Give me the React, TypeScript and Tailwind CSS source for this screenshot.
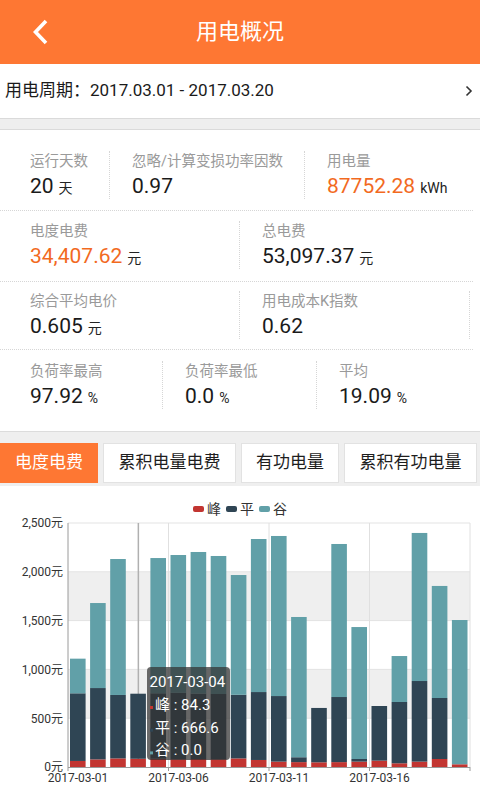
import clsx from "clsx";

// [峰, 平, 谷] per day, 2017-03-01 .. 2017-03-20
const bars: [number, number, number][] = [
  [62, 693, 355],
  [78, 731, 871],
  [88, 650, 1393],
  [84.3, 666.6, 0],
  [85, 670, 1386],
  [80, 680, 1412],
  [82, 670, 1451],
  [80, 668, 1414],
  [88, 652, 1227],
  [72, 696, 1568],
  [55, 672, 1640],
  [50, 50, 1437],
  [48, 557, 0],
  [50, 667, 1568],
  [55, 27, 1352],
  [65, 560, 0],
  [38, 628, 471],
  [55, 826, 1517],
  [82, 625, 1148],
  [28, 0, 1478],
];

const PEAK = "#c23531";
const FLAT = "#2f4554";
const VALLEY = "#61a0a8";

function Stat({
  label,
  value,
  unit,
  orange,
  border,
  className,
}: {
  label: string;
  value: string;
  unit?: string;
  orange?: boolean;
  border?: boolean;
  className?: string;
}) {
  return (
    <div
      className={clsx(
        "pl-[22px] h-[48px]",
        border && "border-l border-dotted border-[#d6d6d6]",
        className
      )}
    >
      <div className="h-[22px] leading-[22px] text-[14.5px] text-[#9a9a9a] whitespace-nowrap">
        {label}
      </div>
      <div className="h-[26px] leading-[26px] flex items-baseline gap-[5px] whitespace-nowrap">
        <span className={clsx("text-[21px]", orange ? "text-[#f26a1f]" : "text-[#1a1a1a]")}>
          {value}
        </span>
        {unit && <span className="text-[14px] text-[#222]">{unit}</span>}
      </div>
    </div>
  );
}

function Chart() {
  const left = 68;
  const right = 470;
  const step = 20.1;
  const bw = 15.6;
  const top = 6;
  const base = 250;
  const k = (base - top) / 2500;
  const yv = (v: number) => base - v * k;
  const ticks = [0, 500, 1000, 1500, 2000, 2500];

  return (
    <svg width="480" height="283" className="block" fontFamily="Roboto, 'Noto Sans CJK SC', sans-serif">
      {/* split areas */}
      <rect x={left} y={yv(2000)} width={right - left} height={500 * k} fill="#efefef" />
      <rect x={left} y={yv(1000)} width={right - left} height={500 * k} fill="#efefef" />
      {ticks.slice(1).map((v) => (
        <line key={v} x1={left} x2={right} y1={yv(v)} y2={yv(v)} stroke="#e3e3e3" />
      ))}
      {[5, 10, 15, 20].map((i) => (
        <line key={i} x1={left + i * step} x2={left + i * step} y1={top} y2={base} stroke="#e0e0e0" />
      ))}
      {/* axis pointer */}
      <line x1={left + 3.5 * step} x2={left + 3.5 * step} y1={top} y2={base} stroke="#b0b0b0" strokeWidth="1.5" />

      {bars.map(([p, f, v], i) => {
        const x = left + 2 + i * step;
        return (
          <g key={i}>
            <rect x={x} y={yv(p)} width={bw} height={p * k} fill={PEAK} />
            {f > 0 && <rect x={x} y={yv(p + f)} width={bw} height={f * k} fill={FLAT} />}
            {v > 0 && <rect x={x} y={yv(p + f + v)} width={bw} height={v * k} fill={VALLEY} />}
          </g>
        );
      })}

      {/* axes */}
      <line x1={left} x2={left} y1={top} y2={base} stroke="#9a9a9a" />
      <line x1={left} x2={right} y1={base + 0.5} y2={base + 0.5} stroke="#9a9a9a" />
      {[0, 5, 10, 15, 20].map((i) => (
        <line key={i} x1={left + i * step} x2={left + i * step} y1={base} y2={base + 4} stroke="#9a9a9a" />
      ))}
      {ticks.map((v) => (
        <text key={v} x={63} y={yv(v)} dy="0.36em" textAnchor="end" fontSize="12" fill="#333">
          {v.toLocaleString("en-US")}元
        </text>
      ))}
      {["2017-03-01", "2017-03-06", "2017-03-11", "2017-03-16"].map((d, j) => (
        <text key={d} x={left + (5 * j + 0.5) * step} y={264.5} textAnchor="middle" fontSize="12" fill="#333">
          {d}
        </text>
      ))}

      {/* tooltip */}
      <rect x={147} y={150} width={83} height={93} rx={4} fill="rgba(50,50,50,0.72)" />
      <text x={149.5} y={165} dominantBaseline="central" fontSize="15" fill="#fff">
        2017-03-04
      </text>
      {[
        ["峰 : 84.3", PEAK],
        ["平 : 666.6", FLAT],
        ["谷 : 0.0", VALLEY],
      ].map(([t, c], i) => (
        <g key={t}>
          <rect x={150} y={189 + i * 22.7} width={3} height={3} fill={c} />
          <text x={155} y={188 + i * 22.7} dominantBaseline="central" fontSize="15" fill="#fff">
            {t}
          </text>
        </g>
      ))}
    </svg>
  );
}

export default function App() {
  const tabs = [
    { label: "电度电费", w: "w-[98px]", active: true },
    { label: "累积电量电费", w: "w-[133px]" },
    { label: "有功电量", w: "w-[98px]" },
    { label: "累积有功电量", w: "w-[133px]" },
  ];

  return (
    <div className="w-[480px] h-[800px] overflow-hidden bg-white font-[Roboto,'Noto_Sans_CJK_SC',sans-serif]">
      {/* header */}
      <div className="h-16 bg-[#fe7733] grid grid-cols-[80px_1fr_80px] items-center">
        <div className="pl-[32px] flex items-center">
          <svg width="18" height="26" viewBox="0 0 18 26">
            <polyline points="14,2 3.5,13 14,24" fill="none" stroke="#fff" strokeWidth="3.6" strokeLinejoin="miter" />
          </svg>
        </div>
        <div className="text-center text-white text-[22px] leading-none">用电概况</div>
        <div />
      </div>

      {/* period */}
      <div className="h-[54px] flex items-center justify-between pl-[5px] pr-[7px] text-[17px] text-[#1a1a1a]">
        <span>用电周期：2017.03.01 - 2017.03.20</span>
        <svg width="8" height="12" viewBox="0 0 8 12">
          <polyline points="1.5,1.5 6,6 1.5,10.5" fill="none" stroke="#333" strokeWidth="1.6" />
        </svg>
      </div>
      <div className="h-[12px] bg-[#eeeeee] border-t border-b border-[#dadada]" />

      {/* stats */}
      <div className="bg-white">
        <div className="pt-[21px] pb-[11px] border-b border-dotted border-[#d6d6d6] mr-[7px]">
          <div className="flex pl-[8px]">
            <Stat className="w-[101px]" label="运行天数" value="20" unit="天" />
            <Stat className="w-[195px]" border label="忽略/计算变损功率因数" value="0.97" />
            <Stat className="flex-1" border label="用电量" value="87752.28" unit="kWh" orange />
          </div>
        </div>
        <div className="pt-[10px] pb-[12px] border-b border-dotted border-[#d6d6d6] mr-[7px]">
          <div className="grid grid-cols-2 pl-[8px] pr-[3px]">
            <Stat label="电度电费" value="34,407.62" unit="元" orange />
            <Stat border label="总电费" value="53,097.37" unit="元" />
          </div>
        </div>
        <div className="pt-[9px] pb-[10px] border-b border-dotted border-[#d6d6d6] mr-[7px]">
          <div className="grid grid-cols-2 pl-[8px] pr-[3px]">
            <Stat label="综合平均电价" value="0.605" unit="元" />
            <Stat border className="border-r border-dotted" label="用电成本K指数" value="0.62" />
          </div>
        </div>
        <div className="pt-[11px] pb-[22px] mr-[7px]">
          <div className="grid grid-cols-3 pl-[8px] pr-[3px]">
            <Stat label="负荷率最高" value="97.92" unit="%" />
            <Stat border label="负荷率最低" value="0.0" unit="%" />
            <Stat border label="平均" value="19.09" unit="%" />
          </div>
        </div>
      </div>

      {/* tabs */}
      <div className="bg-[#efefef] border-t border-[#dcdcdc] pt-[11px] pb-[3px] flex gap-[5px]">
        {tabs.map((t) => (
          <div
            key={t.label}
            className={clsx(
              "h-[40px] flex items-center justify-center text-[17px]",
              t.w,
              t.active ? "bg-[#fe7733] text-white" : "bg-white text-[#1e1e1e] border border-[#e2e2e2]"
            )}
          >
            {t.label}
          </div>
        ))}
      </div>

      {/* chart */}
      <div className="bg-white">
        <div className="pt-[15px] h-[31px] flex justify-center items-center gap-[5px] text-[14px] leading-[16px] text-[#333]">
          {[
            ["峰", "bg-[#c23531]"],
            ["平", "bg-[#2f4554]"],
            ["谷", "bg-[#61a0a8]"],
          ].map(([l, c]) => (
            <div key={l} className="flex items-center gap-[3px]">
              <span className={clsx("w-[11px] h-[6px] rounded-[2px]", c)} />
              <span>{l}</span>
            </div>
          ))}
        </div>
        <Chart />
      </div>
    </div>
  );
}
